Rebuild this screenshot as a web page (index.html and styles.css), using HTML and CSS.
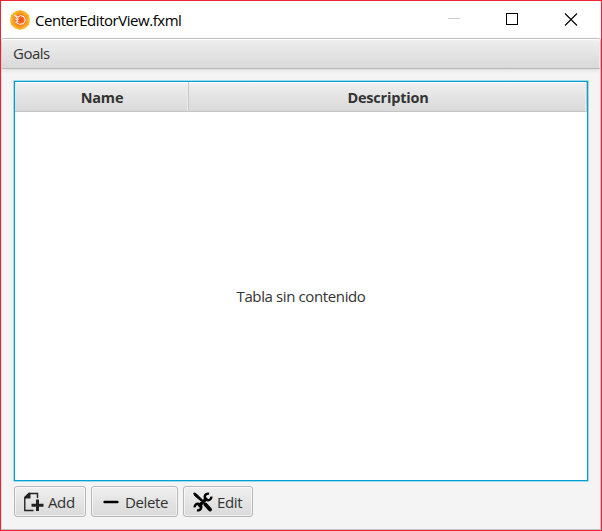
FILE: index.html
```html
<!DOCTYPE html>
<html lang="es">
<head>
<meta charset="utf-8">
<title>CenterEditorView.fxml</title>
<link rel="stylesheet" href="styles.css">
</head>
<body>
<div class="window">
  <header class="titlebar">
    <svg class="logo" width="20" height="20" viewBox="0 0 20 20">
      <path d="M5.200 1.600Q10-.6 14.800 1.600Q19.600 4.500 19.900 10Q19.600 15.500 14.800 18.400Q10 20.600 5.200 18.400Q.4 15.500.1 10Q.4 4.500 5.200 1.600Z" fill="#fbb62a"/>
      <path d="M10 0L14 3H6ZM10 20L6 17H14ZM1 5L5 5L2 9ZM19 5L15 5L18 9ZM1 15L5 15L2 11ZM19 15L15 15L18 11Z" fill="#f8a922"/>
      <circle cx="10" cy="10" r="7.400" fill="#f8961f"/>
      <circle cx="10.200" cy="10" r="5.600" fill="#f36a25"/>
      <path d="M4.500 5.300L8 7L10.500 5.500L14 6.800L15.300 10L13.500 13.700L9.500 14.300L5.600 12.300L8 11.500L5.500 8.800L8.500 9.300Z" fill="none" stroke="#fff" stroke-width="1"/>
      <circle cx="11" cy="9.700" r="1.800" fill="#f04b23"/>
    </svg>
    <span class="caption">CenterEditorView.fxml</span>
    <svg class="controls" width="131" height="14" viewBox="0 0 131 14">
      <path d="M0 5.500H12" stroke="#ccc"/>
      <rect x="58.500" y="0.500" width="11" height="11" fill="none" stroke="#000"/>
      <path d="M117 .5L129 12.500M129 .5L117 12.500" stroke="#000" stroke-width="1.100"/>
    </svg>
  </header>
  <main class="scene">
    <nav class="menubar"><span class="menu">Goals</span></nav>
    <div class="content">
      <section class="table">
        <div class="columns">
          <div class="column"><span>Name</span></div>
          <div class="column"><span>Description</span></div>
        </div>
        <div class="placeholder"><span>Tabla sin contenido</span></div>
      </section>
      <div class="actions">
        <button class="button add">
          <svg width="22" height="20" viewBox="0 0 22 20">
            <path d="M10.500 18.500H1.800V6L6.500 1.500H14.500V6" fill="none" stroke="#222" stroke-width="1.400"/>
            <path d="M1.100 6.500V5L5.500 .8H7.500V6.500Z" fill="#222"/>
            <path d="M14.500 7.500V19M8.500 13.300H20.500" stroke="#222" stroke-width="3"/>
          </svg>
          <span>Add</span>
        </button>
        <button class="button delete">
          <svg width="16" height="20" viewBox="0 0 16 20"><path d="M1.500 10H14.500" stroke="#000" stroke-width="2.400" stroke-linecap="round"/></svg>
          <span>Delete</span>
        </button>
        <button class="button edit">
          <svg width="20" height="20" viewBox="0 0 20 20">
            <path d="M.8 1L3 1.500L9.500 8L8 9L1.500 3.500Z" fill="#000" stroke="#000"/>
            <path d="M12.500 12.500L17 17.500" stroke="#000" stroke-width="3.800" stroke-linecap="round"/>
            <path d="M5.500 14.500L14 6" stroke="#000" stroke-width="3.200"/>
            <path d="M16 1.800A3.300 3.300 0 1 0 18.300 4.600M1.700 15.400A3.300 3.300 0 1 1 4 18.200" fill="none" stroke="#000" stroke-width="2.400"/>
          </svg>
          <span>Edit</span>
        </button>
      </div>
    </div>
  </main>
</div>
</body>
</html>
```
FILE: styles.css
```css
* { box-sizing: border-box; }
body { margin: 0; }
.window {
  width: 602px;
  height: 531px;
  border: 1px solid #ed2336;
  display: flex;
  flex-direction: column;
  background: #fff;
  color: #333;
  font: 15px "Open Sans", "Noto Sans", sans-serif;
  letter-spacing: -0.38px;
  white-space: nowrap;
}
.titlebar {
  height: 37px;
  display: flex;
  align-items: center;
  padding: 0 22px 0 9px;
}
.caption { margin-left: 5px; color: #000; letter-spacing: -0.46px; }
.controls { margin-left: auto; }
.scene {
  flex: 1;
  display: flex;
  flex-direction: column;
  background: #f4f4f4;
  border: 1px solid #c4c4c4;
  border-left-color: #ddd;
  border-radius: 3px 3px 0 0;
}
.menubar {
  height: 30px;
  padding-left: 11px;
  line-height: 29px;
  letter-spacing: -0.5px;
  background: linear-gradient(#efefef, #d9d9d9);
  border-bottom: 1px solid #b9b9b9;
  box-shadow: inset 0 1px #fff, inset -1px 0 #ececec, 0 1px 4px rgba(0, 0, 0, .12);
  border-radius: 2px 2px 0 0;
}
.content { padding: 11px 11px 0; }
.table {
  height: 402px;
  width: 576px;
  border: 1px solid #a1d8ea;
  border-radius: 1px;
  box-shadow: inset 0 0 0 1px #039ed3;
  padding: 1px;
  background: #fff;
}
.columns { display: grid; grid-template: 30px / 174px 1fr; }
.column {
  background: linear-gradient(#efefef, #d9d9d9);
  border-right: 1px solid #c8c8c8;
  border-bottom: 1px solid #c4c4c4;
  box-shadow: inset 0 1px #fff, inset -1px 0 #ececec;
  padding-left: 1px;
  text-align: center;
  font-size: 14.5px;
  font-weight: 700;
  letter-spacing: -0.2px;
  line-height: 31px;
}
.placeholder {
  height: 368px;
  display: flex;
  align-items: center;
  justify-content: center;
}
.actions { display: flex; gap: 5px; margin: 4px 0 0 1px; }
.button {
  height: 31px;
  display: flex;
  align-items: center;
  padding: 0;
  border: 1px solid #b7b7b7;
  border-radius: 3px;
  background: linear-gradient(#efefef, #dadada);
  box-shadow: inset 0 0 0 1px rgba(255, 255, 255, .6);
  font: inherit;
  letter-spacing: inherit;
  color: #333;
}
.add { width: 72px; padding-left: 8px; }
.add span { margin-left: 3px; }
.delete { width: 87px; padding-left: 11px; }
.delete span { margin-left: 6px; }
.edit { width: 70px; padding-left: 9px; }
.edit span { margin-left: 4px; }
```
